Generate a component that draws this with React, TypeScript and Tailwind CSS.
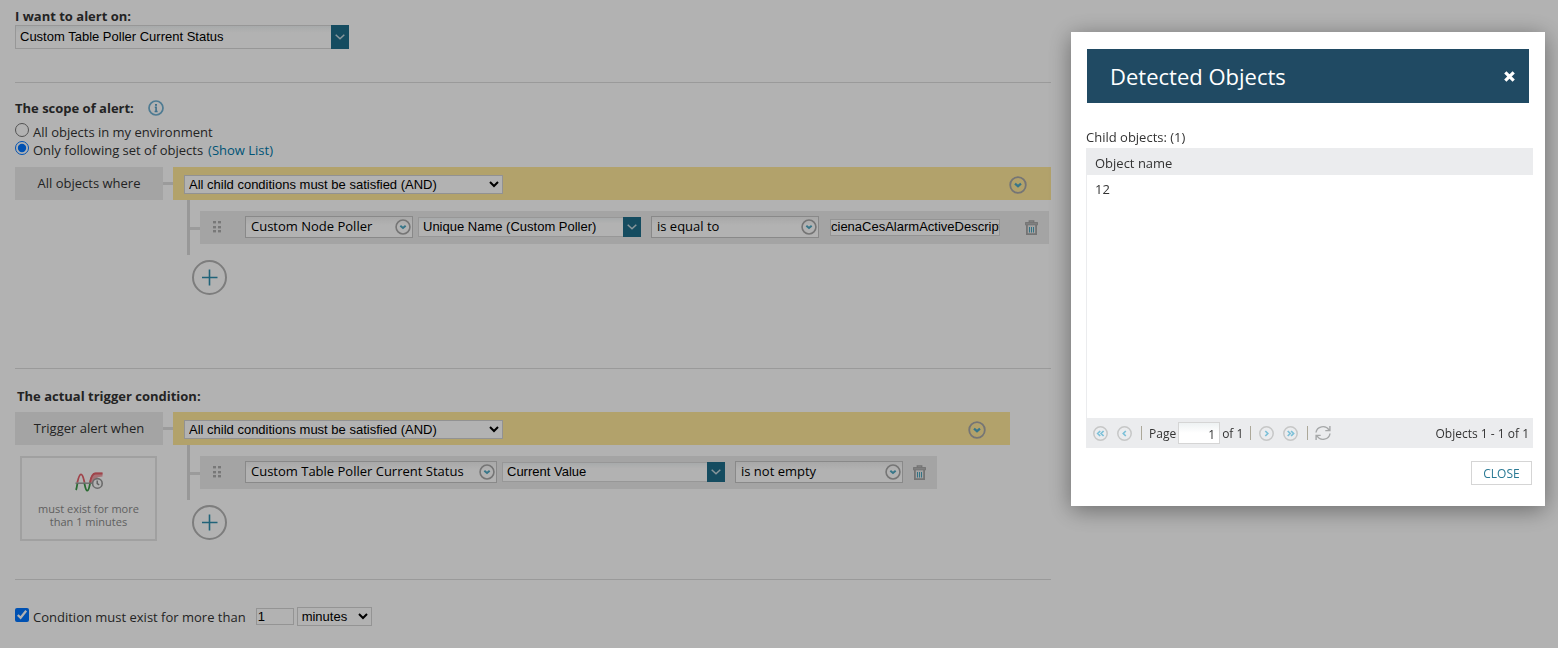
import type { ReactNode } from 'react';

const ARIAL = "font-['Liberation_Sans',Arial,sans-serif]";

/* ---------- Icons ---------- */

function CircleChevron({ className }: { className: string }) {
    return (
        <svg className={className} viewBox="0 0 18 18" fill="none" aria-hidden="true">
            <circle cx="9" cy="9" r="7.8" stroke="#a8a8a8" strokeWidth="1.8" />
            <path d="M6 7.6 9 10.2 12 7.6" stroke="#4fa9c4" strokeWidth="2.2" />
        </svg>
    );
}

function TrashIcon() {
    return (
        <svg className="w-[13px] h-[15px]" viewBox="0 0 13 15" fill="none" aria-hidden="true">
            <path d="M4.3 2.5 V1 H8.7 V2.5" stroke="#a6a6a6" strokeWidth="1.4" />
            <rect x="0.6" y="2.6" width="11.8" height="2.2" fill="#b8b8b8" stroke="#a6a6a6" />
            <path d="M1.9 5 V14.2 H11.1 V5" stroke="#a6a6a6" strokeWidth="1.8" />
            <path d="M4.5 7 V12.5 M6.5 7 V12.5 M8.5 7 V12.5" stroke="#4aa5bf" />
        </svg>
    );
}

function DragDots() {
    return (
        <svg className="w-2 h-3" viewBox="0 0 8 12" fill="#acacac" aria-hidden="true">
            {[0, 5, 9].map((y) => (
                <g key={y}>
                    <rect x="0" y={y} width="3" height="2.4" />
                    <rect x="5" y={y} width="3" height="2.4" />
                </g>
            ))}
        </svg>
    );
}

function InfoIcon() {
    return (
        <svg className="w-4 h-4" viewBox="0 0 16 16" fill="none" aria-hidden="true">
            <circle cx="8" cy="8" r="7" stroke="#70b0d2" strokeWidth="1.7" />
            <rect x="7" y="4" width="2" height="1.8" fill="#5a9fc6" />
            <path d="M6.8 7.2 H8.1 V11.4 M6.6 11.5 H9.6" stroke="#5a9fc6" strokeWidth="1.6" />
        </svg>
    );
}

function WaveClock() {
    return (
        <svg className="w-7 h-5" viewBox="0 0 28 20" fill="none" aria-hidden="true">
            <path d="M2.3 10.5 C3.6 5 4.5 2.4 6 2.4 C8 2.4 8.5 6.5 9.5 10.5" stroke="#e5606a" strokeWidth="1.8" />
            <path d="M14.2 11 C15.4 5 17 0.6 20.5 0.6 H27.5 V4.4 C23 4.6 19.8 5.8 18.4 11 Z" fill="#efa4a9" />
            <path d="M15 10.5 C16 5 17.6 1.5 20.5 1.5 H27.5" stroke="#e5606a" strokeWidth="1.8" />
            <path d="M1 18 C1.7 16.5 2 13.5 2.5 10.8" stroke="#3d9a48" strokeWidth="1.8" />
            <path d="M9.3 10.8 C10.3 15.5 10.8 18.7 12.2 18.7 C14 18.7 14.3 14.5 15.2 10.8" stroke="#3d9a48" strokeWidth="1.8" />
            <path d="M0.5 11.2 H19" stroke="#999" strokeWidth="1.4" />
            <circle cx="22.4" cy="11.4" r="4.8" fill="#fff" stroke="#999" strokeWidth="1.6" />
            <path d="M22.2 8.4 V11.6 L24.2 12.8" stroke="#888" strokeWidth="1.4" />
        </svg>
    );
}

function PagerIcon({ d }: { d: string }) {
    return (
        <svg className="w-[15px] h-[15px]" viewBox="0 0 15 15" fill="none" aria-hidden="true">
            <circle cx="7.5" cy="7.5" r="6.7" stroke="#c6c7c7" strokeWidth="1.5" />
            <path d={d} stroke="#7cc0d8" strokeWidth="1.7" />
        </svg>
    );
}

/* ---------- Controls ---------- */

// Editable-looking combo with the teal arrow block on the right
function Combo({ label, value, className }: { label: string; value: string; className: string }) {
    return (
        <div className={`relative flex ${className}`}>
            <select
                aria-label={label}
                className={`appearance-none w-full border border-[#d9d9d9] bg-linear-to-b from-[#f0f4f5] to-white to-30% pl-1 pr-6 text-[13px] leading-4 text-black ${ARIAL}`}
            >
                <option>{value}</option>
            </select>
            <span className="pointer-events-none absolute inset-y-0 right-0 flex w-[18px] items-center justify-center bg-[#1f6d8a]">
                <svg className="w-[10px] h-[6px]" viewBox="0 0 10 6" fill="none" aria-hidden="true">
                    <path d="M0.7 0.7 5 4.7 9.3 0.7" stroke="#c5d8df" strokeWidth="1.5" />
                </svg>
            </span>
        </div>
    );
}

function FieldSelect({ label, value, className }: { label: string; value: string; className: string }) {
    return (
        <div className={`relative flex h-[22px] ${className}`}>
            <select
                aria-label={label}
                className="appearance-none w-full border border-[#c4c4c4] bg-linear-to-b from-[#f1f1f1] to-white to-40% pb-[2px] pl-[5px] pr-6 text-[13px] leading-[18px] text-black"
            >
                <option>{value}</option>
            </select>
            <CircleChevron className="pointer-events-none absolute right-[2px] top-[3px] w-4 h-4" />
        </div>
    );
}

function ConditionGroup({ name, side, barClass, children }: { name: string; side?: ReactNode; barClass: string; children: ReactNode }) {
    return (
        <div className="flex items-start">
            <div className="w-[148px] shrink-0">
                <div className="flex h-[33px] items-center justify-center bg-[#ebebeb] pb-[2px]">{name}</div>
                {side}
            </div>
            <div className="mt-[15px] h-[3px] w-[10px] shrink-0 bg-[#dfdfdf]" />
            <div className="min-w-0 flex-1">
                <div className={`flex h-[33px] items-center justify-between bg-[#ffe89a] pl-[11px] pr-6 pt-[2px] ${barClass}`}>
                    <select
                        aria-label={`${name} operator`}
                        className={`h-[19px] w-[319px] border border-[#d2d2d2] bg-white text-[13px] text-black ${ARIAL}`}
                    >
                        <option>All child conditions must be satisfied (AND)</option>
                    </select>
                    <button type="button" aria-label="Group options">
                        <CircleChevron className="w-[18px] h-[18px]" />
                    </button>
                </div>
                <div className="ml-[14px] flex items-start">
                    <div className="h-[55px] w-[3px] shrink-0 bg-[#dadada]" />
                    <div className="mt-[27px] h-[3px] w-[10px] shrink-0 bg-[#dfdfdf]" />
                    <div className="mt-[11px] flex h-[33px] items-center bg-[#ebebeb] pb-px pl-[13px] pr-[11px]">
                        <DragDots />
                        {children}
                        <button type="button" aria-label="Delete condition">
                            <TrashIcon />
                        </button>
                    </div>
                </div>
                <button type="button" aria-label="Add condition" className="ml-[19px] mt-[5px] block">
                    <svg className="w-[35px] h-[35px]" viewBox="0 0 35 35" fill="none" aria-hidden="true">
                        <circle cx="17.5" cy="17.5" r="16.5" stroke="#b4b4b4" strokeWidth="2" />
                        <path d="M10 17.5 H25.5 M17.5 9.5 V25.5" stroke="#2f8fae" strokeWidth="1.6" />
                    </svg>
                </button>
            </div>
        </div>
    );
}

/* ---------- Dialog ---------- */

function DetectedObjectsDialog() {
    return (
        <div
            role="dialog"
            aria-labelledby="dialog-title"
            className="fixed right-[13px] top-8 w-[474px] bg-white pb-[21px] pl-[15px] pr-3 pt-[17px] shadow-[0_4px_22px_rgba(0,0,0,0.4)]"
        >
            <div className="ml-px mr-1 flex h-[54px] items-center justify-between bg-[#204a63] pl-[23px] pr-[14px] text-white">
                <h2 id="dialog-title" className="text-[22px] leading-8">Detected Objects</h2>
                <button type="button" aria-label="Close dialog">
                    <svg className="w-[11px] h-[11px]" viewBox="0 0 11 11" fill="none" aria-hidden="true">
                        <path d="M1.3 1.3 9.7 9.7 M9.7 1.3 1.3 9.7" stroke="#fff" strokeWidth="3.2" />
                    </svg>
                </button>
            </div>

            <p className="mb-px mt-6 leading-5">Child objects: (1)</p>
            <div className="min-h-[270px] border-l border-[#ebecee]">
                <table className="w-full text-left">
                    <thead>
                        <tr className="h-[27px] bg-[#ebecee]">
                            <th className="pl-2 pt-[2px] font-normal">Object name</th>
                        </tr>
                    </thead>
                    <tbody>
                        <tr className="h-[27px]">
                            <td className="pl-2 pt-px">12</td>
                        </tr>
                    </tbody>
                </table>
            </div>
            <div className="flex h-[30px] items-center bg-[#ebecee] pl-[7px] pr-1 text-xs text-[#333]">
                <div className="flex gap-[9px]">
                    <button type="button" aria-label="First page"><PagerIcon d="M7.2 5 4.7 7.5 7.2 10 M10.6 5 8.1 7.5 10.6 10" /></button>
                    <button type="button" aria-label="Previous page"><PagerIcon d="M8.8 5 6.3 7.5 8.8 10" /></button>
                </div>
                <div className="ml-[9px] h-[14px] w-px bg-[#aca899]" />
                <label htmlFor="page" className="ml-[7px] pt-[2px]">Page</label>
                <input
                    id="page"
                    defaultValue="1"
                    className="ml-[2px] h-[22px] w-[42px] border border-[#d5d5d5] bg-linear-to-b from-[#eef2f3] to-white to-50% pr-1 pt-[2px] text-right text-xs"
                />
                <span className="ml-[2px] pt-[2px]">of 1</span>
                <div className="ml-[7px] h-[14px] w-px bg-[#aca899]" />
                <div className="ml-2 flex gap-[9px]">
                    <button type="button" aria-label="Next page"><PagerIcon d="M6.3 5 8.8 7.5 6.3 10" /></button>
                    <button type="button" aria-label="Last page"><PagerIcon d="M4.7 5 7.2 7.5 4.7 10 M8.1 5 10.6 7.5 8.1 10" /></button>
                </div>
                <div className="ml-[9px] h-[14px] w-px bg-[#aca899]" />
                <button type="button" aria-label="Refresh" className="ml-[7px]">
                    <svg className="w-4 h-4" viewBox="0 0 16 16" fill="none" stroke="#a6a8a9" strokeWidth="1.4" aria-hidden="true">
                        <path d="M1 7.5 A7 6.6 0 0 1 14 5 M14.9 1 V5.6 H10.3" />
                        <path d="M15 8.5 A7 6.6 0 0 1 2 11 M1.1 15 V10.4 H5.7" />
                    </svg>
                </button>
                <span className="ml-auto pt-[2px]">Objects 1 - 1 of 1</span>
            </div>
            <div className="mt-[13px] flex justify-end pr-px">
                <button type="button" className="h-6 w-[61px] border border-[#d5d5d5] pt-px text-xs text-[#297994]">CLOSE</button>
            </div>
        </div>
    );
}

export default function App() {
    return (
        <div className="min-h-screen bg-white font-['Open_Sans',sans-serif] text-[13px] leading-[18px] text-[#333]">
            <main className="ml-[15px] mr-[507px]">
                <section className="pb-[33px] pt-[7px]">
                    <h3 className="font-bold">I want to alert on:</h3>
                    <Combo label="I want to alert on" value="Custom Table Poller Current Status" className="h-6 w-[334px]" />
                </section>

                <section className="border-t border-[#ddd] pb-[73px] pt-4">
                    <div className="flex items-center gap-[14px]">
                        <h3 className="font-bold">The scope of alert:</h3>
                        <button type="button" aria-label="Scope help"><InfoIcon /></button>
                    </div>
                    <label className="mt-[6px] flex items-start gap-1">
                        <input type="radio" name="scope" className="size-[14px]" />
                        All objects in my environment
                    </label>
                    <div className="mb-2 flex items-start gap-1">
                        <input id="scope-set" type="radio" name="scope" defaultChecked className="size-[14px]" />
                        <label htmlFor="scope-set">Only following set of objects</label>
                        <a href="#list" className="ml-px text-[#0079aa]">(Show List)</a>
                    </div>
                    <ConditionGroup name="All objects where" barClass="">
                        <FieldSelect label="Object type" value="Custom Node Poller" className="ml-6 w-[168px]" />
                        <Combo label="Property" value="Unique Name (Custom Poller)" className="ml-[5px] h-5 w-[223px]" />
                        <FieldSelect label="Comparison" value="is equal to" className="ml-[10px] w-[168px]" />
                        <input
                            aria-label="Value"
                            defaultValue="cienaCesAlarmActiveDescription"
                            className={`ml-[11px] mr-[25px] h-[17px] w-[170px] border border-[#d5d5d5] bg-white text-[13px] text-black ${ARIAL}`}
                        />
                    </ConditionGroup>
                </section>

                <section className="border-t border-[#ddd] pb-[38px] pt-[18px]">
                    <h3 className="mb-[7px] ml-[2px] font-bold">The actual trigger condition:</h3>
                    <ConditionGroup
                        name="Trigger alert when"
                        barClass="mr-[41px]"
                        side={
                            <div className="ml-[5px] mr-[6px] mt-[11px] flex h-[85px] flex-col items-center border-2 border-[#e6e6e6] pt-[14px] text-center text-[11px] leading-[13px] text-[#8a8a8a]">
                                <WaveClock />
                                <p className="mt-[10px]">must exist for more<br />than 1 minutes</p>
                            </div>
                        }
                    >
                        <FieldSelect label="Trigger object" value="Custom Table Poller Current Status" className="ml-6 w-[252px]" />
                        <Combo label="Trigger property" value="Current Value" className="ml-[5px] h-5 w-[223px]" />
                        <FieldSelect label="Trigger comparison" value="is not empty" className="ml-[10px] mr-[10px] w-[168px]" />
                    </ConditionGroup>
                </section>

                <section className="flex items-center border-t border-[#ddd] pt-[27px]">
                    <label className="flex items-start gap-1">
                        <input type="checkbox" defaultChecked className="size-[14px]" />
                        Condition must exist for more than
                    </label>
                    <input
                        aria-label="Duration"
                        defaultValue="1"
                        className={`ml-[10px] h-[17px] w-[38px] border border-[#d5d5d5] bg-white px-px text-[13px] text-black ${ARIAL}`}
                    />
                    <select
                        aria-label="Duration unit"
                        className={`ml-[3px] h-[19px] w-[75px] border border-[#d5d5d5] bg-white text-[13px] text-black ${ARIAL}`}
                    >
                        <option>minutes</option>
                    </select>
                </section>
            </main>

            {/* Dim everything behind the dialog */}
            <div className="fixed inset-0 bg-black/30" />
            <DetectedObjectsDialog />
        </div>
    );
}
